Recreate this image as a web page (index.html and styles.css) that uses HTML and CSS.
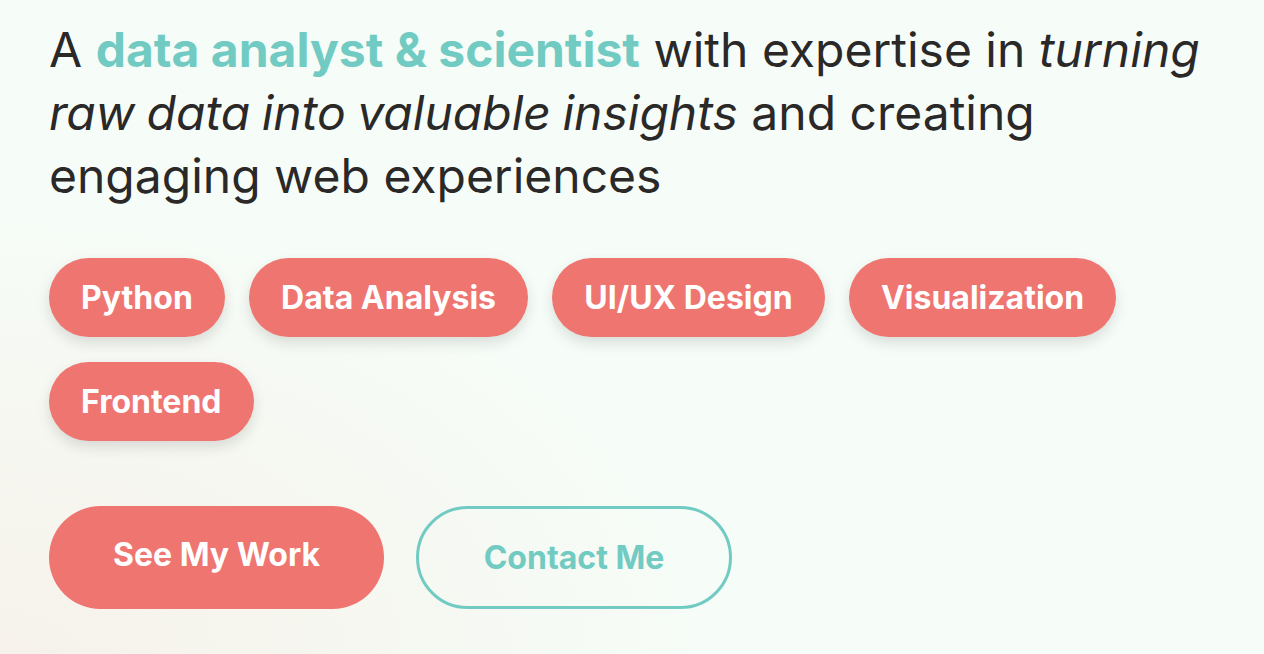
FILE: index.html
```html
<!DOCTYPE html>
<html lang="en">
<head>
<meta charset="utf-8">
<title>Hero</title>
<link rel="stylesheet" href="styles.css">
</head>
<body>
<section class="hero">
  <h1 class="lead">A <strong class="accent">data analyst &amp; scientist</strong> with expertise in <em>turning raw data into valuable insights</em> and creating engaging web experiences</h1>
  <ul class="tags">
    <li class="tag">Python</li>
    <li class="tag">Data Analysis</li>
    <li class="tag">UI/UX Design</li>
    <li class="tag">Visualization</li>
    <li class="tag">Frontend</li>
  </ul>
  <div class="actions">
    <a class="btn btn-primary" href="#work">See My Work</a>
    <a class="btn btn-outline" href="#contact">Contact Me</a>
  </div>
</section>
</body>
</html>
```
FILE: styles.css
```css
html, body {
  margin: 0;
  padding: 0;
}
body {
  font-family: Inter, "Noto Sans", sans-serif;
  color: #2b2828;
  width: 1264px;
  height: 654px;
  overflow: hidden;
  background:
    radial-gradient(ellipse 760px 480px at 0px 660px, #f6f2eb 0%, rgba(246, 243, 236, 0.75) 35%, rgba(247, 251, 245, 0) 100%),
    #f6fdf8;
}
.hero {
  padding: 18px 49px 0;
}
.lead {
  margin: 0;
  font-size: 48px;
  font-weight: 400;
  line-height: 63px;
  max-width: 1170px;
}
.accent {
  color: #72cbc3;
  font-weight: 700;
}
.lead em {
  font-style: italic;
  word-spacing: -2px;
}
.tags {
  list-style: none;
  margin: 51px 0 0;
  padding: 0;
  display: flex;
  flex-wrap: wrap;
  gap: 25px 24.3px;
}
.tag {
  background: #ef7571;
  color: #fff;
  font-weight: 700;
  font-size: 32px;
  line-height: 39px;
  padding: 20px 32px;
  border-radius: 40px;
  box-shadow: 0 6px 14px rgba(0, 0, 0, 0.12);
}
.actions {
  display: flex;
  gap: 32px;
  margin-top: 65px;
}
.btn {
  display: inline-flex;
  align-items: center;
  justify-content: center;
  height: 103px;
  box-sizing: border-box;
  border-radius: 52px;
  font-size: 32px;
  font-weight: 700;
  text-decoration: none;
}
.btn-primary {
  background: #ef7571;
  color: #fff;
  width: 335px;
  padding-bottom: 6px;
}
.btn-outline {
  border: 3px solid #72cbc3;
  color: #72cbc3;
  width: 316px;
}
```
